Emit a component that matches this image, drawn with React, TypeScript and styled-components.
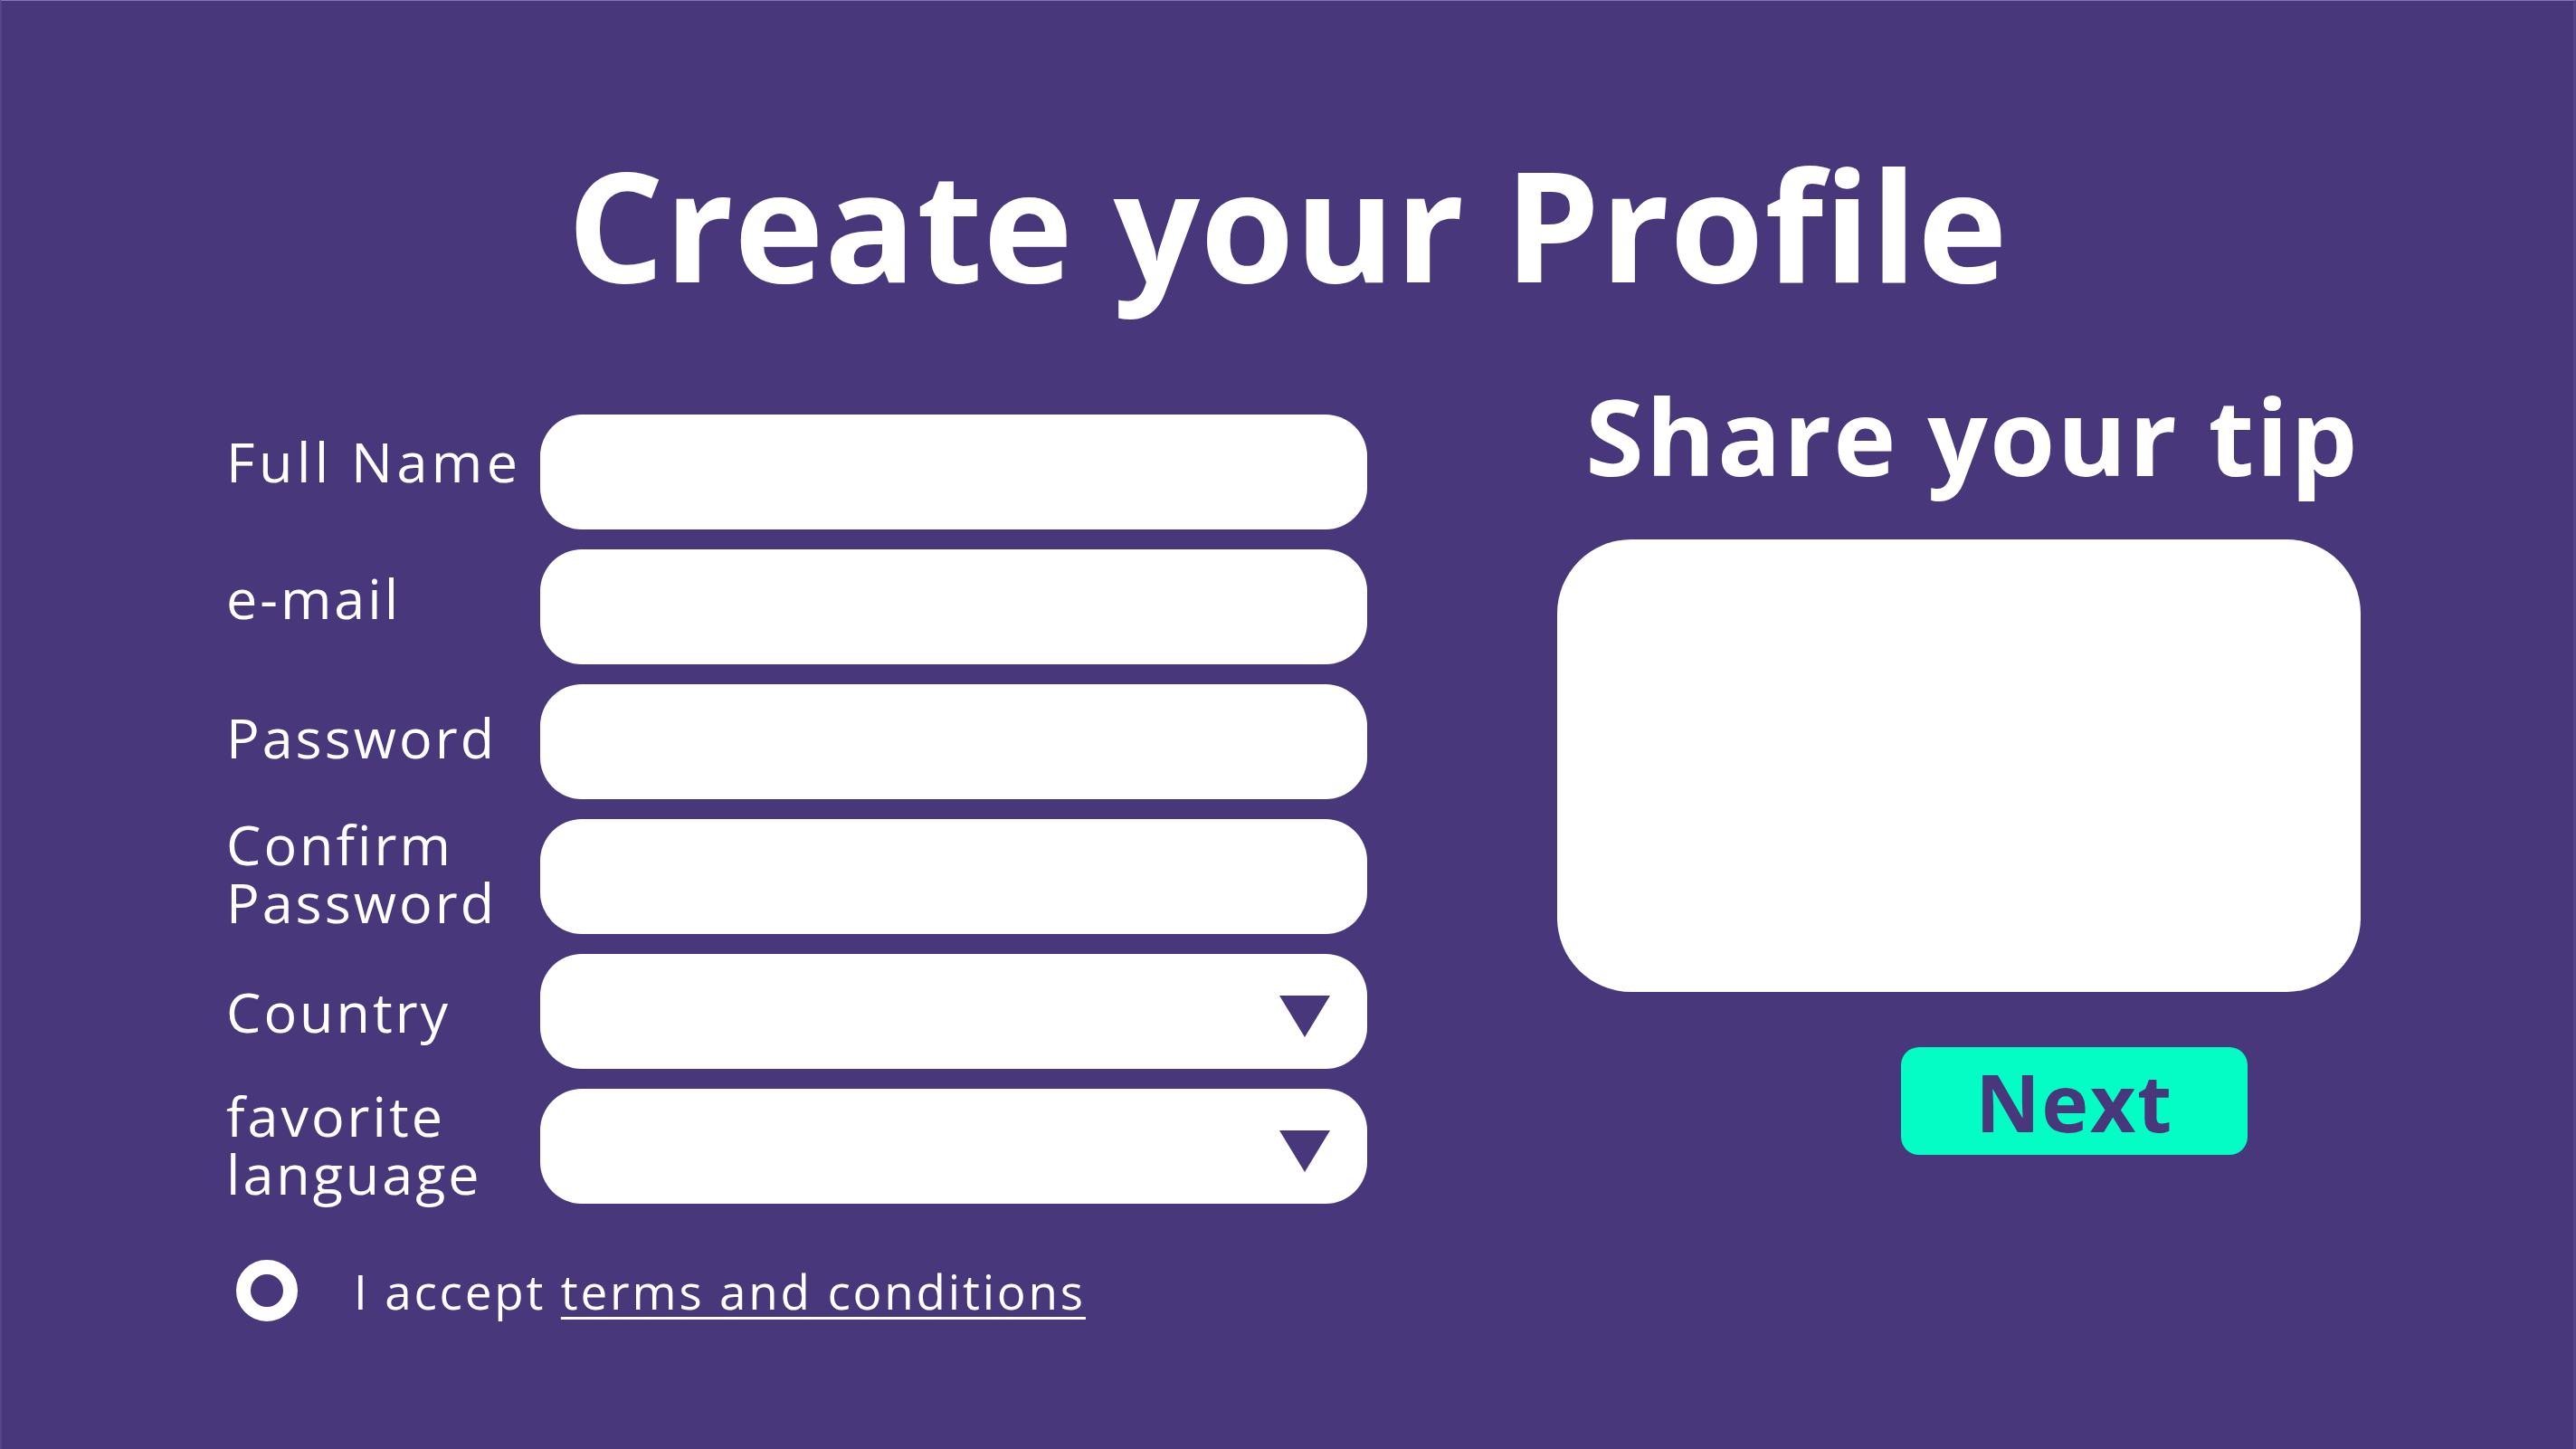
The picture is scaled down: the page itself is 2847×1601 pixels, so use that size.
import React from "react";
import styled, { createGlobalStyle } from "styled-components";

const Global = createGlobalStyle`
  html, body { margin: 0; padding: 0; background: #48377a; }
  * { box-sizing: border-box; }
`;

const Page = styled.div`
  width: 2847px;
  height: 1601px;
  overflow: hidden;
  background: #48377a;
  border-top: 1px solid #8478b0;
  border-left: 2px solid #55458a;
  border-right: 3px solid #55458a;
  font-family: "Open Sans", "Liberation Sans", sans-serif;
  color: #ffffff;
  display: flex;
  flex-direction: column;
  align-items: stretch;
`;

const Title = styled.h1`
  margin: 162px 0 0 0;
  font-size: 168px;
  line-height: 1;
  font-weight: 700;
  text-align: center;
  letter-spacing: 0.5px;
`;

const Main = styled.div`
  display: flex;
  align-items: flex-start;
  padding-left: 248px;
  margin-top: 91px;
  gap: 212px;
`;

const LeftColumn = styled.div`
  width: 1259px;
  margin-top: 36px;
  display: flex;
  flex-direction: column;
`;

const FormGrid = styled.div`
  display: grid;
  grid-template-columns: 347px 914px;
  grid-auto-rows: 127px;
  row-gap: 22px;
`;

const Label = styled.label<{ $shift?: number; $spacing?: number }>`
  align-self: center;
  font-size: 61px;
  font-weight: 400;
  line-height: 64px;
  letter-spacing: ${(p) => p.$spacing ?? 3}px;
  transform: translateY(${(p) => p.$shift ?? 0}px);
`;

const Field = styled.div`
  position: relative;
  background: #ffffff;
  border-radius: 46px;
  display: flex;
  align-items: center;
  justify-content: flex-end;
  padding-right: 41px;
`;

const Arrow = styled.svg`
  width: 56px;
  height: 46px;
  margin-top: 10px;
`;

const AcceptRow = styled.div`
  display: flex;
  align-items: center;
  margin-top: 62px;
  padding-left: 11px;
  gap: 62px;
`;

const Radio = styled.span`
  width: 68px;
  height: 68px;
  border-radius: 50%;
  border: 16px solid #ffffff;
  flex-shrink: 0;
`;

const AcceptText = styled.span`
  font-size: 53px;
  line-height: 1;
  letter-spacing: 2.8px;
  font-weight: 400;
`;

const TermsLink = styled.a`
  color: #ffffff;
  text-decoration: underline;
  text-decoration-thickness: 3px;
  text-underline-offset: 8px;
`;

const RightColumn = styled.div`
  width: 888px;
  display: flex;
  flex-direction: column;
`;

const SubTitle = styled.h2`
  margin: 0;
  padding-left: 30px;
  font-size: 117px;
  line-height: 1;
  font-weight: 700;
  text-align: center;
  letter-spacing: 2.2px;
`;

const TipBox = styled.div`
  margin-top: 57px;
  height: 500px;
  background: #ffffff;
  border-radius: 82px;
`;

const NextButton = styled.button`
  margin: 61px 0 0 380px;
  width: 383px;
  height: 119px;
  border: none;
  border-radius: 20px;
  background: #03fdc5;
  color: #48377a;
  font-family: "Open Sans", "Liberation Sans", sans-serif;
  font-size: 88px;
  font-weight: 700;
  line-height: 1;
  letter-spacing: 1.5px;
  padding: 0;
  cursor: pointer;
`;

const DownArrow = () => (
  <Arrow viewBox="0 0 56 46">
    <polygon points="0,0 56,0 28,46" fill="#48377a" />
  </Arrow>
);

type Row = { label: React.ReactNode; select?: boolean; shift?: number; spacing?: number };

const rows: Row[] = [
  { label: "Full Name", shift: -12, spacing: 4.5 },
  { label: "e-mail", shift: -10 },
  { label: "Password", shift: -5 },
  { label: <>Confirm<br />Password</>, shift: -4 },
  { label: "Country", select: true, shift: 0 },
  { label: <>favorite<br />language</>, select: true, shift: -2 },
];

export default function App() {
  return (
    <>
      <Global />
      <Page>
        <Title>Create your Profile</Title>
        <Main>
          <LeftColumn>
            <FormGrid>
              {rows.map((r, i) => (
                <React.Fragment key={i}>
                  <Label $shift={r.shift} $spacing={r.spacing}>{r.label}</Label>
                  <Field>{r.select && <DownArrow />}</Field>
                </React.Fragment>
              ))}
            </FormGrid>
            <AcceptRow>
              <Radio />
              <AcceptText>
                I accept <TermsLink>terms and conditions</TermsLink>
              </AcceptText>
            </AcceptRow>
          </LeftColumn>
          <RightColumn>
            <SubTitle>Share your tip</SubTitle>
            <TipBox />
            <NextButton>Next</NextButton>
          </RightColumn>
        </Main>
      </Page>
    </>
  );
}
